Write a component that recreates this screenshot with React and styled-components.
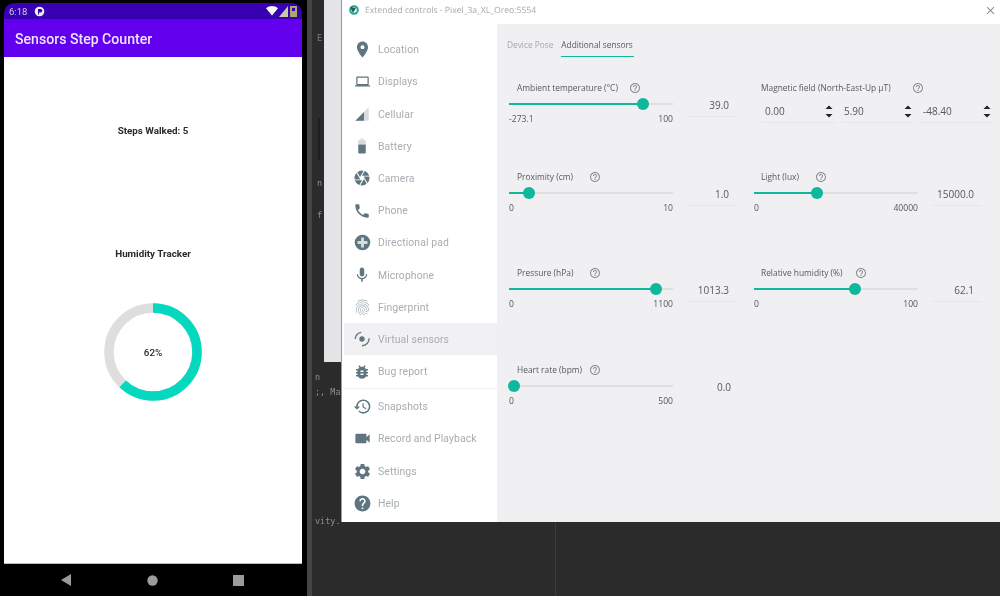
import React from "react";
import styled, { createGlobalStyle } from "styled-components";
import {
  MdLocationOn,
  MdLaptop,
  MdCamera,
  MdPhone,
  MdMic,
  MdFingerprint,
  MdBugReport,
  MdHistory,
  MdVideocam,
  MdSettings,
  MdHelp,
  MdHelpOutline,
  MdClose,
} from "react-icons/md";

const teal = "#0fb89c";
const iconGrey = "#5f7680";

const GlobalStyle = createGlobalStyle`
  html, body {
    margin: 0;
    padding: 0;
    background: #000;
    font-family: "Roboto", "Liberation Sans", sans-serif;
  }
`;

const Desktop = styled.div`
  display: flex;
  width: 1000px;
  height: 596px;
  overflow: hidden;
  filter: blur(0.35px);
`;

/* phone */
const Phone = styled.div`
  width: 307px;
  flex: none;
  display: flex;
  flex-direction: column;
  background: #000;
  padding: 3px 5px 0 4px;
  box-sizing: border-box;
`;

const StatusBar = styled.div`
  height: 16px;
  flex: none;
  display: flex;
  align-items: center;
  gap: 7px;
  padding: 0 4px 0 5px;
  background: #3700b3;
  border-radius: 10px 10px 0 0;
  color: #cfc8e6;
  font-size: 9.5px;
`;

const StatusRight = styled.div`
  margin-left: auto;
  display: flex;
  align-items: center;
  gap: 1px;
`;

const AppBar = styled.div`
  height: 38px;
  flex: none;
  display: flex;
  align-items: center;
  padding-left: 11px;
  padding-top: 2px;
  box-sizing: border-box;
  background: #6200ee;
  color: #efe4ff;
  font-size: 14.1px;
  font-weight: 500;
`;

const Screen = styled.div`
  height: 506px;
  flex: none;
  display: flex;
  flex-direction: column;
  align-items: center;
  background: #fff;
  border-bottom: 1px solid #bbb;
  box-sizing: content-box;
`;

const Heading = styled.div`
  margin-top: ${(p) => p.$top}px;
  height: 12px;
  line-height: 12px;
  font-size: 9.8px;
  font-weight: 700;
  color: #2a2a2a;
`;

const Gauge = styled.div`
  position: relative;
  margin-top: 43px;
  width: 98px;
  height: 98px;
`;

const GaugeText = styled.div`
  position: absolute;
  inset: 0;
  display: flex;
  align-items: center;
  justify-content: center;
  font-size: 9.8px;
  font-weight: 500;
  color: #2a2a2a;
`;

const NavBar = styled.div`
  flex: 1;
  display: flex;
  justify-content: center;
  align-items: center;
  gap: 75px;
  padding-right: 2px;
`;

/* IDE behind the emulator window */
const Ide = styled.div`
  position: relative;
  flex: 1;
  display: flex;
  flex-direction: column;
  background: #2b2b2b;
  border-left: 5px solid #454545;
`;

const TopPane = styled.div`
  height: 362px;
  flex: none;
  display: flex;
`;

const Gutter = styled.div`
  width: 12px;
  flex: none;
  display: flex;
  flex-direction: column;
  padding: 33px 0 0 5px;
  box-sizing: border-box;
`;

const ScrollMark = styled.div`
  width: 2px;
  height: 42px;
  margin: 74px 0 0 1px;
  background: #1e1e1e;
`;

const PalePanel = styled.div`
  flex: 1;
  background: linear-gradient(90deg, #e4e4e6 0%, #f6f6f6 100%);
`;

const BottomPane = styled.div`
  position: relative;
  flex: 1;
  padding: 10px 0 0 3px;
  &::after {
    content: "";
    position: absolute;
    left: 243px;
    top: 160px;
    bottom: 0;
    width: 1px;
    background: #3c3c3c;
  }
`;

const Code = styled.div`
  margin-top: ${(p) => p.$top || 0}px;
  height: 11px;
  line-height: 11px;
  font-family: "DejaVu Sans Mono", monospace;
  font-size: 8.5px;
  color: ${(p) => p.$color || "#8b8f94"};
  white-space: pre;
`;

const ExtendedWindow = styled.div`
  position: absolute;
  left: 29px;
  top: 0;
  width: 659px;
  height: 522px;
  display: flex;
  flex-direction: column;
  background: #fff;
  border-left: 1px solid #9a9a9a;
  box-sizing: border-box;
`;

const TitleBar = styled.div`
  height: 24px;
  flex: none;
  display: flex;
  align-items: center;
  padding: 0 3px 4px 7px;
  box-sizing: border-box;
  gap: 6px;
  color: #a5a9ad;
  font-family: "Open Sans", sans-serif;
  font-size: 8.6px;
  text-rendering: geometricPrecision;
`;

const CloseButton = styled.div`
  margin-left: auto;
  display: flex;
  color: #8e8e8e;
`;

const WindowBody = styled.div`
  flex: 1;
  display: flex;
  min-height: 0;
`;

const Sidebar = styled.div`
  width: 155px;
  flex: none;
  display: flex;
  flex-direction: column;
  padding-top: 9.6px;
  box-sizing: border-box;
`;

const NavRow = styled.div`
  height: 32.2px;
  flex: none;
  display: flex;
  align-items: center;
  margin-left: 2px;
  padding-left: 8px;
  gap: 6px;
  background: ${(p) => (p.$active ? "#f1f1f3" : "transparent")};
  color: #a7adb2;
  font-size: 10.4px;
  letter-spacing: 0.1px;
`;

const NavIcon = styled.span`
  width: 20px;
  height: 20px;
  display: flex;
  align-items: center;
  justify-content: center;
  color: ${(p) => p.$color || iconGrey};
`;

const SidebarRule = styled.div`
  height: 1px;
  margin: 0 0 2px 2px;
  background: #f1f1f3;
`;

const Content = styled.div`
  flex: 1;
  display: flex;
  flex-direction: column;
  background: #f0eff1;
  padding: 0 0 0 12px;
  font-family: "Open Sans", sans-serif;
`;

const Tabs = styled.div`
  height: 33px;
  flex: none;
  display: flex;
  align-items: flex-start;
  gap: 7px;
  margin-left: -2px;
`;

const Tab = styled.div`
  height: 33px;
  line-height: 42px;
  box-sizing: border-box;
  padding-right: 1px;
  font-size: 8.3px;
  color: ${(p) => (p.$active ? "#555a5e" : "#a7a9ac")};
  border-bottom: 1px solid ${(p) => (p.$active ? teal : "transparent")};
`;

const SensorGrid = styled.div`
  display: grid;
  grid-template-columns: 245px 1fr;
  grid-template-rows: 89px 96px 97px auto;
  margin-top: 24px;
`;

const SensorCell = styled.div`
  display: flex;
  flex-direction: column;
`;

const LabelRow = styled.div`
  height: 16px;
  display: flex;
  align-items: flex-start;
  padding-left: ${(p) => (p.$right ? 7 : 8)}px;
`;

const Label = styled.div`
  width: ${(p) => p.$width}px;
  flex: none;
  height: 14px;
  line-height: 14px;
  font-size: 8.4px;
  color: #555a5e;
  white-space: nowrap;
`;

const HelpIcon = styled.span`
  display: flex;
  height: 14px;
  align-items: center;
  color: #8a8d90;
`;

const ControlRow = styled.div`
  display: flex;
  align-items: flex-start;
`;

const SliderBlock = styled.div`
  width: 164px;
  flex: none;
`;

const Track = styled.div`
  position: relative;
  height: 14px;
  &::before {
    content: "";
    position: absolute;
    left: 0;
    right: 0;
    top: 6px;
    height: 2px;
    background: #dfdfe0;
  }
`;

const TrackFill = styled.div`
  position: absolute;
  left: 0;
  top: 6px;
  height: 2px;
  background: ${teal};
`;

const Thumb = styled.div`
  position: absolute;
  top: 1px;
  width: 12px;
  height: 12px;
  margin-left: -6px;
  border-radius: 50%;
  background: ${teal};
`;

const Ticks = styled.div`
  display: flex;
  justify-content: space-between;
  height: 14px;
  line-height: 14px;
  margin-top: 1px;
  font-size: 8.6px;
  color: #55595c;
`;

const ValueBox = styled.div`
  width: 48px;
  margin-left: 15px;
  height: 20px;
  line-height: 17px;
  box-sizing: border-box;
  padding-right: ${(p) => (p.$plain ? 5 : 7)}px;
  text-align: right;
  font-size: 10px;
  color: #55595c;
  border-bottom: 1px solid ${(p) => (p.$plain ? "transparent" : "#e6e6e8")};
`;

const SpinRow = styled.div`
  display: flex;
  gap: 6px;
  margin-top: 6px;
  padding-left: 8px;
`;

const SpinBox = styled.div`
  width: 73px;
  height: 20px;
  display: flex;
  align-items: center;
  justify-content: space-between;
  box-sizing: border-box;
  padding: 0 1px 3px 3px;
  font-size: 10px;
  color: #55595c;
  border-bottom: 1px solid #e6e6e8;
`;

const ICON_SIZE = 17;

const CellularIcon = () => (
  <svg width="16" height="16" viewBox="0 0 24 24" fill="currentColor">
    <path d="M2 22h20V2z" opacity="0.25" />
    <path d="M15 9L2 22h13z" />
  </svg>
);

const BatteryIcon = () => (
  <svg width="18" height="18" viewBox="0 0 24 24" fill="currentColor">
    <path
      opacity="0.25"
      d="M17 5.33C17 4.6 16.4 4 15.67 4H14V2h-4v2H8.33C7.6 4 7 4.6 7 5.33V10h10z"
    />
    <path d="M7 10v10.67C7 21.4 7.6 22 8.33 22h7.33c.74 0 1.34-.6 1.34-1.33V10z" />
  </svg>
);

const DpadIcon = () => (
  <svg width="17" height="17" viewBox="0 0 24 24">
    <circle cx="12" cy="12" r="11" fill="currentColor" />
    <path d="M10 5h4v5h5v4h-5v5h-4v-5H5v-4h5z" fill="#d5dde0" />
  </svg>
);

const VirtualIcon = () => (
  <svg width="18" height="18" viewBox="0 0 24 24" fill="none" stroke="currentColor">
    <circle cx="12" cy="12" r="3.6" fill="currentColor" stroke="none" />
    <path d="M3 12 A9 9 0 0 1 11 3.2" strokeWidth="1.8" />
    <path d="M21.5 11 A9.5 9.5 0 0 1 12 21" strokeWidth="1.8" />
  </svg>
);

const LogoIcon = () => (
  <svg width="10" height="10" viewBox="0 0 10 10">
    <circle cx="5" cy="5" r="3.8" fill="none" stroke="#17a88f" strokeWidth="2" />
    <path d="M1 2l6 1-3 5z" fill="#36545c" />
  </svg>
);

const Spinner = () => (
  <svg width="10" height="13" viewBox="0 0 10 13" fill="#222">
    <path d="M5 0.5L8.5 4H1.5z" />
    <path d="M5 12.5L8.5 9H1.5z" />
  </svg>
);

const NAV_TOP = [
  { label: "Location", icon: <MdLocationOn size={ICON_SIZE + 2} /> },
  { label: "Displays", icon: <MdLaptop size={ICON_SIZE - 2} /> },
  { label: "Cellular", icon: <CellularIcon /> },
  { label: "Battery", icon: <BatteryIcon /> },
  { label: "Camera", icon: <MdCamera size={ICON_SIZE + 1} /> },
  { label: "Phone", icon: <MdPhone size={ICON_SIZE + 1} /> },
  { label: "Directional pad", icon: <DpadIcon /> },
  { label: "Microphone", icon: <MdMic size={ICON_SIZE + 1} /> },
  { label: "Fingerprint", icon: <MdFingerprint size={ICON_SIZE + 2} />, color: "#aebcc2" },
  { label: "Virtual sensors", icon: <VirtualIcon />, active: true },
  { label: "Bug report", icon: <MdBugReport size={ICON_SIZE + 1} /> },
];

const NAV_BOTTOM = [
  { label: "Snapshots", icon: <MdHistory size={ICON_SIZE + 2} /> },
  { label: "Record and Playback", icon: <MdVideocam size={ICON_SIZE + 2} /> },
  { label: "Settings", icon: <MdSettings size={ICON_SIZE + 2} /> },
  { label: "Help", icon: <MdHelp size={ICON_SIZE + 2} /> },
];

const SENSORS = [
  { label: "Ambient temperature (°C)", width: 112, min: -273.1, max: 100, value: 39, text: "39.0", col: 1, row: 1 },
  { label: "Proximity (cm)", width: 72, min: 0, max: 10, value: 1, text: "1.0", col: 1, row: 2 },
  { label: "Light (lux)", width: 54, min: 0, max: 40000, value: 15000, text: "15000.0", col: 2, row: 2 },
  { label: "Pressure (hPa)", width: 72, min: 0, max: 1100, value: 1013.3, text: "1013.3", col: 1, row: 3 },
  { label: "Relative humidity (%)", width: 94, min: 0, max: 100, value: 62.1, text: "62.1", col: 2, row: 3 },
  { label: "Heart rate (bpm)", width: 72, min: 0, max: 500, value: 0, text: "0.0", col: 1, row: 4, plain: true },
];

const Sensor = ({ s }) => {
  const pct = (s.value - s.min) / (s.max - s.min);
  const x = 5 + pct * 154;
  return (
    <SensorCell style={{ gridColumn: s.col, gridRow: s.row }}>
      <LabelRow $right={s.col === 2}>
        <Label $width={s.width}>{s.label}</Label>
        <HelpIcon>
          <MdHelpOutline size={12} />
        </HelpIcon>
      </LabelRow>
      <ControlRow>
        <SliderBlock>
          <Track>
            <TrackFill style={{ width: x }} />
            <Thumb style={{ left: x }} />
          </Track>
          <Ticks>
            <span>{s.min}</span>
            <span>{s.max}</span>
          </Ticks>
        </SliderBlock>
        <ValueBox $plain={s.plain}>{s.text}</ValueBox>
      </ControlRow>
    </SensorCell>
  );
};

const Humidity = ({ value }) => {
  const r = 44;
  const c = 2 * Math.PI * r;
  return (
    <Gauge>
      <svg width="98" height="98" viewBox="0 0 98 98">
        <circle cx="49" cy="49" r={r} fill="none" stroke="#dedede" strokeWidth="9.5" />
        <circle
          cx="49"
          cy="49"
          r={r}
          fill="none"
          stroke="#04d9bf"
          strokeWidth="9.5"
          strokeDasharray={`${c * value} ${c}`}
          transform="rotate(-90 49 49)"
        />
      </svg>
      <GaugeText>62%</GaugeText>
    </Gauge>
  );
};

const App = () => (
  <Desktop>
    <GlobalStyle />
    <Phone>
      <StatusBar>
        <span>6:18</span>
        <svg width="11" height="11" viewBox="0 0 11 11">
          <circle cx="5.5" cy="5.5" r="4.8" fill="#eee" />
          <path d="M4 3h2.6a1.6 1.6 0 0 1 0 3.4H5V8.4H4z" fill="#3700b3" />
        </svg>
        <StatusRight>
          <svg width="12" height="10" viewBox="0 0 12 10">
            <path d="M0 2.2C3.4-.6 8.6-.6 12 2.2L6 9.6z" fill="#f4f4f4" />
          </svg>
          <svg width="9" height="11" viewBox="0 0 9 11">
            <path d="M9 0v11H0z" fill="#c9c9a8" />
          </svg>
          <svg width="9" height="12" viewBox="0 0 9 12">
            <path d="M1 1h7v11H1z" fill="#a8a868" />
            <path d="M3 3h3v3H3z" fill="#3700b3" />
          </svg>
        </StatusRight>
      </StatusBar>
      <AppBar>Sensors Step Counter</AppBar>
      <Screen>
        <Heading $top={68}>Steps Walked: 5</Heading>
        <Heading $top={111}>Humidity Tracker</Heading>
        <Humidity value={0.62} />
      </Screen>
      <NavBar>
        <svg width="12" height="12" viewBox="0 0 12 12">
          <path d="M11 0v12L1 6z" fill="#9b9b9b" />
        </svg>
        <svg width="11" height="11" viewBox="0 0 11 11">
          <circle cx="5.5" cy="5.5" r="5.2" fill="#9b9b9b" />
        </svg>
        <svg width="11" height="11" viewBox="0 0 11 11">
          <path d="M0 0h11v11H0z" fill="#9b9b9b" />
        </svg>
      </NavBar>
    </Phone>

    <Ide>
      <TopPane>
        <Gutter>
          <Code $color="#77797d">E</Code>
          <ScrollMark />
          <Code $top={18}>n</Code>
          <Code $top={21}>f</Code>
        </Gutter>
        <PalePanel />
      </TopPane>
      <BottomPane>
        <Code>n</Code>
        <Code $top={4}>;, Ma</Code>
        <Code $top={118}>vity.</Code>
      </BottomPane>

      <ExtendedWindow>
        <TitleBar>
          <LogoIcon />
          <span>Extended controls - Pixel_3a_XL_Oreo:5554</span>
          <CloseButton>
            <MdClose size={13} />
          </CloseButton>
        </TitleBar>
        <WindowBody>
          <Sidebar>
            {NAV_TOP.map((n) => (
              <NavRow key={n.label} $active={n.active}>
                <NavIcon $color={n.color}>{n.icon}</NavIcon>
                {n.label}
              </NavRow>
            ))}
            <SidebarRule />
            {NAV_BOTTOM.map((n) => (
              <NavRow key={n.label}>
                <NavIcon>{n.icon}</NavIcon>
                {n.label}
              </NavRow>
            ))}
          </Sidebar>
          <Content>
            <Tabs>
              <Tab>Device Pose</Tab>
              <Tab $active>Additional sensors</Tab>
            </Tabs>
            <SensorGrid>
              {SENSORS.map((s) => (
                <Sensor key={s.label} s={s} />
              ))}
              <SensorCell style={{ gridColumn: 2, gridRow: 1 }}>
                <LabelRow $right>
                  <Label $width={151}>Magnetic field (North-East-Up µT)</Label>
                  <HelpIcon>
                    <MdHelpOutline size={12} />
                  </HelpIcon>
                </LabelRow>
                <SpinRow>
                  <SpinBox>
                    0.00 <Spinner />
                  </SpinBox>
                  <SpinBox>
                    5.90 <Spinner />
                  </SpinBox>
                  <SpinBox>
                    -48.40 <Spinner />
                  </SpinBox>
                </SpinRow>
              </SensorCell>
            </SensorGrid>
          </Content>
        </WindowBody>
      </ExtendedWindow>
    </Ide>
  </Desktop>
);

export default App;
